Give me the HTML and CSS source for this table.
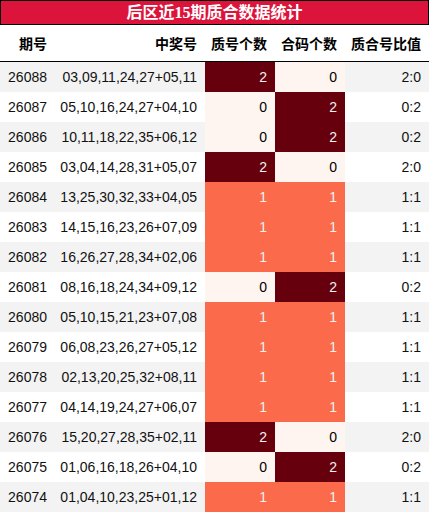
FILE: index.html
```html
<!DOCTYPE html>
<html lang="zh">
<head>
    <meta charset="UTF-8">
    <title>后区近15期质合数据统计</title>
    <link rel="stylesheet" href="styles.css">
</head>
<body>
    <div class="board">
        <div class="caption">后区近15期质合数据统计</div>
        <table class="stats">
            <thead>
                <tr>
                    <th class="c-issue">期号</th>
                    <th class="c-draw">中奖号</th>
                    <th class="c-num">质号个数</th>
                    <th class="c-num">合码个数</th>
                    <th class="c-ratio">质合号比值</th>
                </tr>
            </thead>
            <tbody>
                <tr><td>26088</td><td>03,09,11,24,27+05,11</td><td class="v2">2</td><td class="v0">0</td><td>2:0</td></tr>
                <tr><td>26087</td><td>05,10,16,24,27+04,10</td><td class="v0">0</td><td class="v2">2</td><td>0:2</td></tr>
                <tr><td>26086</td><td>10,11,18,22,35+06,12</td><td class="v0">0</td><td class="v2">2</td><td>0:2</td></tr>
                <tr><td>26085</td><td>03,04,14,28,31+05,07</td><td class="v2">2</td><td class="v0">0</td><td>2:0</td></tr>
                <tr><td>26084</td><td>13,25,30,32,33+04,05</td><td class="v1">1</td><td class="v1">1</td><td>1:1</td></tr>
                <tr><td>26083</td><td>14,15,16,23,26+07,09</td><td class="v1">1</td><td class="v1">1</td><td>1:1</td></tr>
                <tr><td>26082</td><td>16,26,27,28,34+02,06</td><td class="v1">1</td><td class="v1">1</td><td>1:1</td></tr>
                <tr><td>26081</td><td>08,16,18,24,34+09,12</td><td class="v0">0</td><td class="v2">2</td><td>0:2</td></tr>
                <tr><td>26080</td><td>05,10,15,21,23+07,08</td><td class="v1">1</td><td class="v1">1</td><td>1:1</td></tr>
                <tr><td>26079</td><td>06,08,23,26,27+05,12</td><td class="v1">1</td><td class="v1">1</td><td>1:1</td></tr>
                <tr><td>26078</td><td>02,13,20,25,32+08,11</td><td class="v1">1</td><td class="v1">1</td><td>1:1</td></tr>
                <tr><td>26077</td><td>04,14,19,24,27+06,07</td><td class="v1">1</td><td class="v1">1</td><td>1:1</td></tr>
                <tr><td>26076</td><td>15,20,27,28,35+02,11</td><td class="v2">2</td><td class="v0">0</td><td>2:0</td></tr>
                <tr><td>26075</td><td>01,06,16,18,26+04,10</td><td class="v0">0</td><td class="v2">2</td><td>0:2</td></tr>
                <tr><td>26074</td><td>01,04,10,23,25+01,12</td><td class="v1">1</td><td class="v1">1</td><td>1:1</td></tr>
            </tbody>
        </table>
    </div>
</body>
</html>
```

FILE: styles.css
```css
body {
    margin: 0;
    background: #ffffff;
}

.board {
    width: 429px;
}

.caption {
    height: 23px;
    line-height: 23px;
    border: 1px solid #000000;
    background: #dc143c;
    color: #ffffff;
    text-align: center;
    font-family: "Liberation Serif", "Noto Sans CJK SC", serif;
    font-size: 16px;
    font-weight: bold;
}

.stats {
    width: 429px;
    border-collapse: collapse;
    border-spacing: 0;
    table-layout: fixed;
    font-family: "Liberation Sans", "Noto Sans CJK SC", sans-serif;
    font-size: 14px;
    color: #111111;
}

.stats th {
    height: 36px;
    padding: 0 8px 0 0;
    text-align: right;
    font-weight: bold;
    color: #000000;
    border-bottom: 1px solid #000000;
}

.c-issue { width: 47px; }
.c-draw { width: 142px; }
.c-num { width: 62px; }
.c-ratio { width: 76px; }

.stats td {
    height: 30px;
    padding: 0 8px 0 0;
    text-align: right;
}

.stats tbody tr:nth-child(odd) {
    background: #f3f3f3;
}

.stats tbody tr:nth-child(even) {
    background: #ffffff;
}

.stats td.v0 {
    background: #fff5f0;
    color: #000000;
}

.stats td.v1 {
    background: #fb6a4a;
    color: #f1f1f1;
}

.stats td.v2 {
    background: #67000d;
    color: #f1f1f1;
}
```
